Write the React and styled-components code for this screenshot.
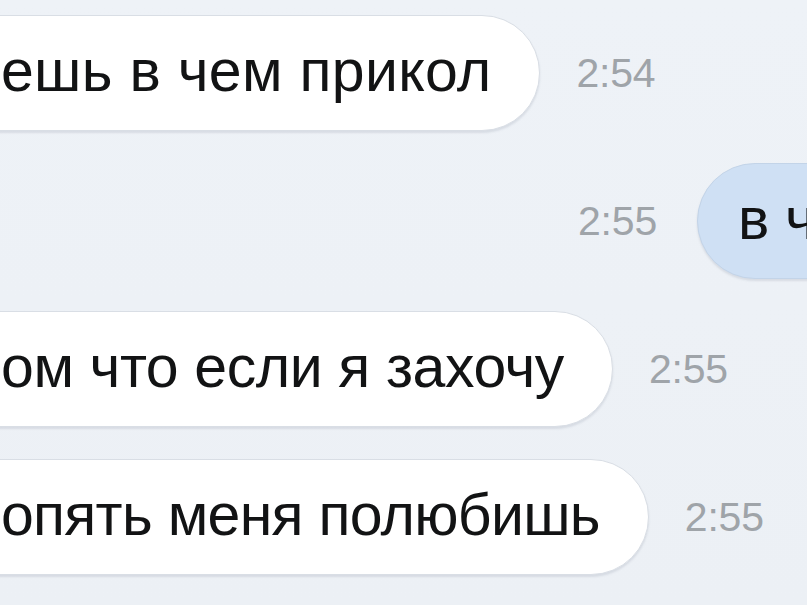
import styled, { createGlobalStyle } from "styled-components";

const GlobalStyle = createGlobalStyle`
  html, body {
    margin: 0;
    padding: 0;
    background: #edf1f6;
    overflow: hidden;
  }
`;

const Chat = styled.div`
  width: 807px;
  height: 605px;
  overflow: hidden;
  display: flex;
  flex-direction: column;
  gap: 32px;
  padding-top: 15px;
  box-sizing: border-box;
  background: linear-gradient(180deg, #eef2f7 0%, #ecf0f5 100%);
  font-family: "Liberation Sans", Arial, sans-serif;
`;

const Row = styled.div`
  display: flex;
  align-items: center;
  gap: ${(p) => (p.$out ? "40px" : "36px")};
  justify-content: ${(p) => (p.$out ? "flex-end" : "flex-start")};
`;

const Bubble = styled.div`
  flex-shrink: 0;
  height: 116px;
  box-sizing: border-box;
  display: flex;
  align-items: center;
  border-radius: 58px;
  font-size: 59px;
  letter-spacing: ${(p) => p.$ls || "-0.4px"};
  color: #121314;
  white-space: nowrap;
  background: ${(p) => (p.$out ? "#cfe0f4" : "#ffffff")};
  border: 1.5px solid ${(p) => (p.$out ? "#c3d4e8" : "#d9dee5")};
  box-shadow: 0 2px 2px rgba(150, 160, 175, 0.25);
  padding: ${(p) => (p.$out ? "0 0 4px 40px" : "0 48px 4px 60px")};
  margin-left: ${(p) => (p.$out ? "0" : "-60px")};
  margin-right: ${(p) => (p.$out ? "-60px" : "0")};
  width: ${(p) => p.$w || "auto"};
`;

const Time = styled.span`
  flex-shrink: 0;
  font-size: 41px;
  color: #9fa4a9;
  letter-spacing: -0.2px;
`;

const messages = [
  { text: "ешь в чем прикол", time: "2:54", ls: "0.3px" },
  { text: "в ч", time: "2:55", out: true, w: "170px" },
  { text: "ом что если я захочу", time: "2:55" },
  { text: "опять меня полюбишь", time: "2:55", ls: "-0.7px" },
];

export default function App() {
  return (
    <>
      <GlobalStyle />
      <Chat>
        {messages.map((m, i) =>
          m.out ? (
            <Row key={i} $out>
              <Time>{m.time}</Time>
              <Bubble $out $w={m.w}>
                {m.text}
              </Bubble>
            </Row>
          ) : (
            <Row key={i}>
              <Bubble $ls={m.ls}>{m.text}</Bubble>
              <Time>{m.time}</Time>
            </Row>
          )
        )}
      </Chat>
    </>
  );
}
